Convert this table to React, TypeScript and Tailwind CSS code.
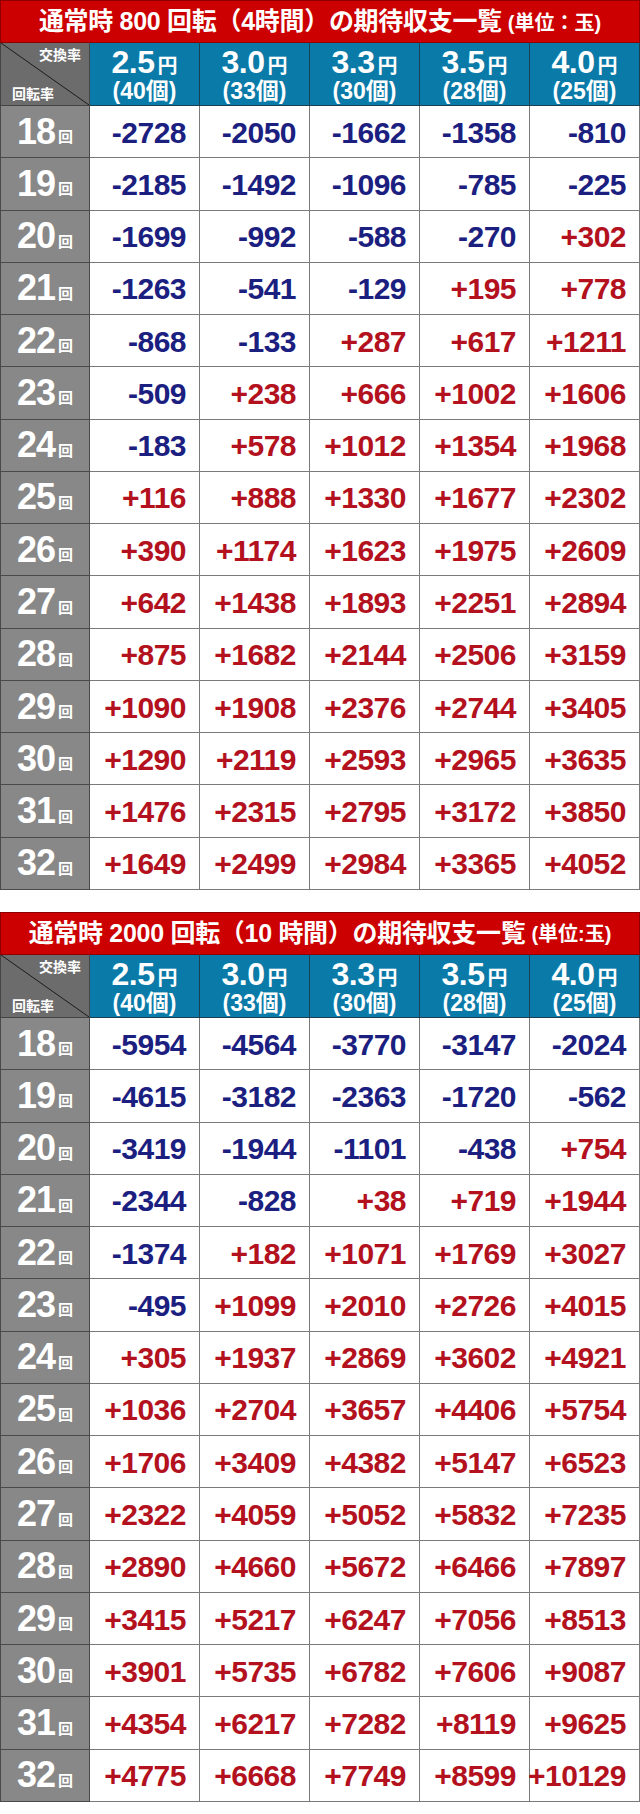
import React from "react";

const rates = [
  { yen: "2.5", count: "40" },
  { yen: "3.0", count: "33" },
  { yen: "3.3", count: "30" },
  { yen: "3.5", count: "28" },
  { yen: "4.0", count: "25" },
];

const labels = [18, 19, 20, 21, 22, 23, 24, 25, 26, 27, 28, 29, 30, 31, 32];

const table800 = [
  ["-2728", "-2050", "-1662", "-1358", "-810"],
  ["-2185", "-1492", "-1096", "-785", "-225"],
  ["-1699", "-992", "-588", "-270", "+302"],
  ["-1263", "-541", "-129", "+195", "+778"],
  ["-868", "-133", "+287", "+617", "+1211"],
  ["-509", "+238", "+666", "+1002", "+1606"],
  ["-183", "+578", "+1012", "+1354", "+1968"],
  ["+116", "+888", "+1330", "+1677", "+2302"],
  ["+390", "+1174", "+1623", "+1975", "+2609"],
  ["+642", "+1438", "+1893", "+2251", "+2894"],
  ["+875", "+1682", "+2144", "+2506", "+3159"],
  ["+1090", "+1908", "+2376", "+2744", "+3405"],
  ["+1290", "+2119", "+2593", "+2965", "+3635"],
  ["+1476", "+2315", "+2795", "+3172", "+3850"],
  ["+1649", "+2499", "+2984", "+3365", "+4052"],
];

const table2000 = [
  ["-5954", "-4564", "-3770", "-3147", "-2024"],
  ["-4615", "-3182", "-2363", "-1720", "-562"],
  ["-3419", "-1944", "-1101", "-438", "+754"],
  ["-2344", "-828", "+38", "+719", "+1944"],
  ["-1374", "+182", "+1071", "+1769", "+3027"],
  ["-495", "+1099", "+2010", "+2726", "+4015"],
  ["+305", "+1937", "+2869", "+3602", "+4921"],
  ["+1036", "+2704", "+3657", "+4406", "+5754"],
  ["+1706", "+3409", "+4382", "+5147", "+6523"],
  ["+2322", "+4059", "+5052", "+5832", "+7235"],
  ["+2890", "+4660", "+5672", "+6466", "+7897"],
  ["+3415", "+5217", "+6247", "+7056", "+8513"],
  ["+3901", "+5735", "+6782", "+7606", "+9087"],
  ["+4354", "+6217", "+7282", "+8119", "+9625"],
  ["+4775", "+6668", "+7749", "+8599", "+10129"],
];

const font = "font-['Liberation_Sans','Noto_Sans_CJK_JP',sans-serif]";

interface Props {
  title: React.ReactNode;
  unit: string;
  rows: string[][];
}

const ExpectTable = ({ title, unit, rows }: Props) => {
  return (
    <div className={`w-[640px] ${font}`}>
      {/* title bar */}
      <div className="h-[43px] bg-[#cc0000] border border-[#8e0000] flex items-center justify-center text-white font-bold">
        <span className="text-[25px] tracking-[-0.3px]">{title}</span>
        <span className="text-[20px] ml-[6px] mt-[2px]">{unit}</span>
      </div>

      {/* header row */}
      <div className="grid grid-cols-[90px_repeat(5,110px)] h-[63px]">
        <div className="relative bg-[#6c6c6c] border-l border-r border-b border-[#444] flex flex-col justify-between pt-[3px] pb-[2px] text-white font-bold text-[14px] leading-[18px]">
          <svg className="absolute inset-0 w-full h-full" viewBox="0 0 90 63" preserveAspectRatio="none">
            <line x1="0" y1="0" x2="90" y2="63" stroke="#1a1a1a" strokeWidth="1" />
          </svg>
          <span className="relative self-end pr-[8px]">交換率</span>
          <span className="relative self-start pl-[11px]">回転率</span>
        </div>
        {rates.map((r) => (
          <div
            key={r.yen}
            className="bg-[#0a7aa8] border-r border-b border-[#1c3f52] flex flex-col items-center justify-center text-white font-bold"
          >
            <div className="flex items-baseline leading-none mt-[1px]">
              <span className="text-[32px] tracking-[-0.5px]">{r.yen}</span>
              <span className="text-[20px] ml-[3px]">円</span>
            </div>
            <div className="text-[23px] leading-none mt-[2px]">({r.count}個)</div>
          </div>
        ))}
      </div>

      {/* body */}
      {rows.map((row, i) => (
        <div key={i} className="grid grid-cols-[90px_repeat(5,110px)] h-[52.27px]">
          <div className="bg-[#888888] border-l border-r border-b border-[#4a4a4a] flex items-center justify-center text-white font-bold">
            <span className="text-[36px] tracking-[-1px] leading-none">{labels[i]}</span>
            <span className="text-[15px] ml-[3px] mt-[10px] leading-none">回</span>
          </div>
          {row.map((v, j) => (
            <div
              key={j}
              className={`bg-white border-r border-b border-[#7a7a7a] flex items-center justify-end pr-[13px] whitespace-nowrap font-bold text-[30px] leading-none tracking-[-0.5px] ${
                v.startsWith("-") ? "text-[#1b2080]" : "text-[#b3111d]"
              }`}
            >
              <span className="mt-[2px]">{v}</span>
            </div>
          ))}
        </div>
      ))}
    </div>
  );
};

const App = () => {
  return (
    <div className="w-[640px] h-[1814px] bg-white">
      <ExpectTable title="通常時 800 回転（4時間）の期待収支一覧" unit="(単位：玉)" rows={table800} />
      <div className="h-[22px]" />
      <ExpectTable title="通常時 2000 回転（10 時間）の期待収支一覧" unit="(単位:玉)" rows={table2000} />
    </div>
  );
};

export default App;
